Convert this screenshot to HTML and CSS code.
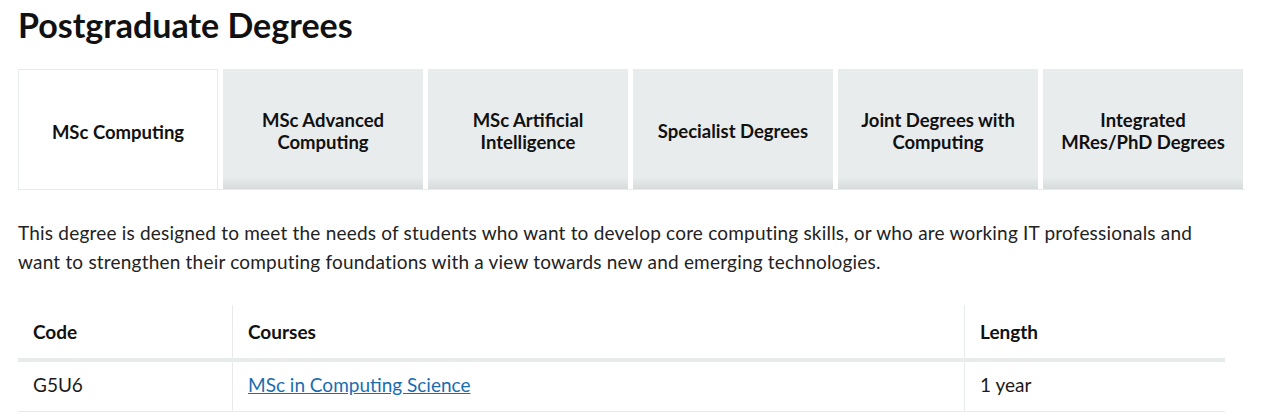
FILE: index.html
```html
<!DOCTYPE html>
<html lang="en">
<head>
    <meta charset="UTF-8">
    <meta name="viewport" content="width=device-width, initial-scale=1.0">
    <link rel="stylesheet" href="styles.css">
</head>
<body>
    <div class="page">
        <h1>Postgraduate Degrees</h1>

        <div class="tabs">
            <div class="tab active">MSc Computing</div>
            <div class="tab">MSc Advanced Computing</div>
            <div class="tab">MSc Artificial Intelligence</div>
            <div class="tab">Specialist Degrees</div>
            <div class="tab">Joint Degrees with Computing</div>
            <div class="tab">Integrated MRes/PhD Degrees</div>
        </div>

        <p class="intro">This degree is designed to meet the needs of students who want to develop core computing skills, or who are working IT professionals and want to strengthen their computing foundations with a view towards new and emerging technologies.</p>

        <table class="courses">
            <thead>
                <tr>
                    <th class="col-code">Code</th>
                    <th class="col-course">Courses</th>
                    <th class="col-length">Length</th>
                </tr>
            </thead>
            <tbody>
                <tr>
                    <td>G5U6</td>
                    <td><a href="#">MSc in Computing Science</a></td>
                    <td>1 year</td>
                </tr>
            </tbody>
        </table>
    </div>
</body>
</html>
```

FILE: styles.css
```css
body {
    margin: 0;
    font-family: Lato, Arial, sans-serif;
    color: #1a1a1a;
    background-color: #fff;
}

.page {
    padding: 0 18px;
}

h1 {
    margin: 0;
    padding-top: 4px;
    font-size: 34px;
    line-height: 42px;
    font-weight: 700;
    color: #111;
}

.tabs {
    display: flex;
    gap: 5px;
    margin-top: 23px;
    width: 1227px;
    border-bottom: 1px solid #e8ebec;
}

.tab {
    width: 200px;
    height: 120px;
    box-sizing: border-box;
    display: flex;
    align-items: center;
    justify-content: center;
    text-align: center;
    padding: 4px 12px 0;
    font-size: 18.5px;
    font-weight: 700;
    line-height: 22px;
    color: #111;
    background: linear-gradient(to bottom, #e9eced 0, #e9eced 90%, #d7dbdc 100%);
}

.tab.active {
    background: #fff;
    border: 1px solid #e8ebec;
    border-bottom: none;
}

.intro {
    margin: 28px 0 0 0;
    font-size: 19px;
    letter-spacing: 0.2px;
    line-height: 29px;
    color: #222;
    max-width: 1190px;
}

.courses {
    margin-top: 29px;
    width: 1207px;
    border-collapse: collapse;
    font-size: 19px;
}

.courses th,
.courses td {
    text-align: left;
    padding: 0 15px;
    border-left: 1px solid #e8ebec;
}

.courses th:first-child,
.courses td:first-child {
    border-left: none;
}

.courses th {
    height: 53px;
    font-weight: 700;
    color: #111;
    border-bottom: 4px solid #e8ebec;
}

.courses td {
    height: 51px;
    padding-bottom: 3px;
    box-sizing: border-box;
    border-bottom: 1px solid #e8ebec;
}

.col-code {
    width: 184px;
}

.col-course {
    width: 701px;
}

.courses a {
    color: #1a6db0;
}
```
